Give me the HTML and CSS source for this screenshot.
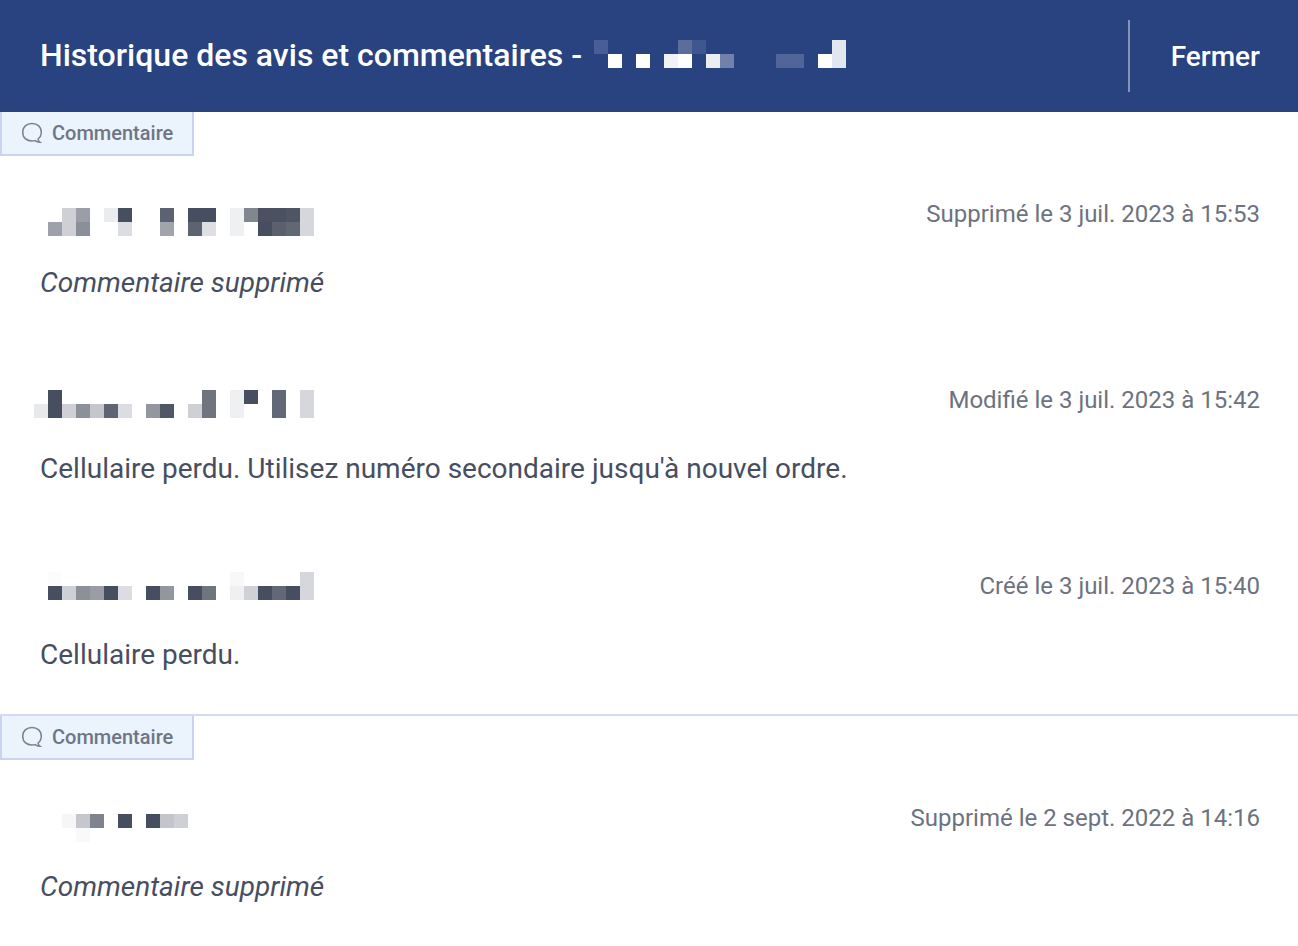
FILE: index.html
```html
<!DOCTYPE html>
<html lang="fr">
<head>
<meta charset="utf-8">
<title>Historique des avis et commentaires</title>
<link rel="stylesheet" href="styles.css">
</head>
<body>
<header class="header">
  <h1 class="title">Historique des avis et commentaires -
    <svg class="mask" width="252" height="28" viewBox="0 1 252 28" shape-rendering="crispEdges" aria-hidden="true">
      <path fill="#495e96" d="M0 0h14v14H0z"/><path fill="#fff" d="M14 14h14v14H14zM42 14h14v14H42zM84 14h14v14H84zM224 14h14v14h-14z"/>
      <path fill="#f0f2f6" d="M70 14h14v14H70z"/><path fill="#5c6c9b" d="M84 0h14v14H84z"/><path fill="#40568f" d="M98 0h14v14H98z"/>
      <path fill="#ecedf2" d="M112 14h14v14h-14z"/><path fill="#7280aa" d="M126 14h14v14h-14z"/><path fill="#51659a" d="M182 14h28v14h-28z"/>
      <path fill="#e2e6ee" d="M238 0h14v28h-14z"/>
    </svg>
  </h1>
  <button class="close" type="button">Fermer</button>
</header>
<main>
  <section class="thread">
    <div class="tag">
      <svg class="bubble" width="20" height="22" viewBox="1 1 20 22" aria-hidden="true"><path d="M17 18.200C19.200 16.500 20.300 14 20.300 11.300C20.300 6 16.500 2.500 11 2.500S1.700 6 1.700 11.300S5.500 20 11 20C12 20 13 19.900 14 19.600C15.300 20.600 16.800 21.200 18.800 21.200C17.600 20.400 17.200 19.400 17 18.200Z"/></svg>
      <span>Commentaire</span>
    </div>
    <article class="entry">
      <div class="entry-head">
        <svg class="mask" width="280" height="28" viewBox="0 0 280 28" shape-rendering="crispEdges" aria-hidden="true">
          <g transform="translate(-6 8)">
            <path fill="#9ea1aa" d="M14 14h14v14H14z"/><path fill="#cfd0d5" d="M28 0h14v28H28z"/><path fill="#9b9da7" d="M42 0h14v14H42z"/><path fill="#8a8f99" d="M42 14h14v14H42z"/>
            <path fill="#ebecee" d="M70 0h14v14H70z"/><path fill="#474e5f" d="M84 0h14v14H84z"/><path fill="#dcdde2" d="M84 14h14v14H84z"/>
            <path fill="#5c6270" d="M126 0h14v14h-14z"/><path fill="#a1a4ad" d="M126 14h14v14h-14z"/>
            <path fill="#474e5f" d="M154 0h28v14h-28z"/><path fill="#5d6471" d="M154 14h14v14h-14z"/><path fill="#dedfe2" d="M168 14h14v14h-14z"/>
            <path fill="#eff0f1" d="M196 0h14v28h-14z"/><path fill="#81868f" d="M210 0h14v14h-14z"/><path fill="#4a5160" d="M224 0h28v14h-28z"/><path fill="#4e5565" d="M252 0h14v14h-14z"/>
            <path fill="#474e5f" d="M224 14h14v14h-14z"/><path fill="#5a616d" d="M238 14h14v14h-14z"/><path fill="#616773" d="M252 14h14v14h-14z"/><path fill="#d6d7dc" d="M266 0h14v28h-14z"/>
          </g>
        </svg>
        <time class="date">Supprimé le 3 juil. 2023 à 15:53</time>
      </div>
      <p class="message removed">Commentaire supprimé</p>
    </article>
    <article class="entry">
      <div class="entry-head">
        <svg class="mask" width="280" height="28" viewBox="0 0 280 28" shape-rendering="crispEdges" aria-hidden="true">
          <g transform="translate(-6 4)">
            <path fill="#e8e9ea" d="M0 14h14v14H0z"/><path fill="#474e5f" d="M14 0h14v28H14z"/><path fill="#cfd0d5" d="M28 14h14v14H28z"/><path fill="#8b9099" d="M42 14h14v14H42z"/><path fill="#c5c6cc" d="M56 14h14v14H56z"/><path fill="#5e6472" d="M70 14h14v14H70z"/><path fill="#dcdde2" d="M84 14h14v14H84z"/>
            <path fill="#92969f" d="M112 14h14v14h-14z"/><path fill="#505867" d="M126 14h14v14h-14z"/>
            <path fill="#cfd0d5" d="M154 14h14v14h-14z"/><path fill="#70747f" d="M168 0h14v28h-14z"/>
            <path fill="#eff0f1" d="M196 0h14v28h-14z"/><path fill="#474e5f" d="M210 0h14v14h-14z"/><path fill="#626875" d="M238 0h14v28h-14z"/><path fill="#d6d7dc" d="M266 0h14v28h-14z"/>
          </g>
        </svg>
        <time class="date">Modifié le 3 juil. 2023 à 15:42</time>
      </div>
      <p class="message">Cellulaire perdu. Utilisez numéro secondaire jusqu'à nouvel ordre.</p>
    </article>
    <article class="entry">
      <div class="entry-head">
        <svg class="mask" width="280" height="28" viewBox="0 0 280 28" shape-rendering="crispEdges" aria-hidden="true">
          <g transform="translate(-6 0)">
            <path fill="#fcfcfd" d="M14 0h14v14H14z"/><path fill="#474e5f" d="M14 14h14v14H14z"/><path fill="#cfd0d5" d="M28 14h14v14H28z"/><path fill="#8b9099" d="M42 14h14v14H42z"/><path fill="#9b9da5" d="M56 14h14v14H56z"/><path fill="#474e5f" d="M70 14h14v14H70z"/><path fill="#dcdde2" d="M84 14h14v14H84z"/>
            <path fill="#474e5f" d="M112 14h14v14h-14z"/><path fill="#92969f" d="M126 14h14v14h-14z"/>
            <path fill="#474e5f" d="M154 14h14v14h-14z"/><path fill="#70747f" d="M168 14h14v14h-14z"/>
            <path fill="#f8f8f9" d="M196 0h14v14h-14z"/><path fill="#eff0f1" d="M196 14h14v14h-14z"/><path fill="#d0d1d6" d="M210 14h14v14h-14z"/><path fill="#474e5f" d="M224 14h14v14h-14zM252 14h14v14h-14z"/><path fill="#626875" d="M238 14h14v14h-14z"/><path fill="#d6d7dc" d="M266 0h14v28h-14z"/>
          </g>
        </svg>
        <time class="date">Créé le 3 juil. 2023 à 15:40</time>
      </div>
      <p class="message">Cellulaire perdu.</p>
    </article>
  </section>
  <section class="thread">
    <div class="tag">
      <svg class="bubble" width="20" height="22" viewBox="1 1 20 22" aria-hidden="true"><path d="M17 18.200C19.200 16.500 20.300 14 20.300 11.300C20.300 6 16.500 2.500 11 2.500S1.700 6 1.700 11.300S5.500 20 11 20C12 20 13 19.900 14 19.600C15.300 20.600 16.800 21.200 18.800 21.200C17.600 20.400 17.200 19.400 17 18.200Z"/></svg>
      <span>Commentaire</span>
    </div>
    <article class="entry">
      <div class="entry-head">
        <svg class="mask" width="280" height="28" viewBox="0 0 280 28" shape-rendering="crispEdges" aria-hidden="true">
          <g transform="translate(-6 10)">
            <path fill="#f6f6f6" d="M28 0h14v14H28z"/><path fill="#c6c7cd" d="M42 0h14v14H42z"/><path fill="#7f838e" d="M56 0h14v14H56z"/><path fill="#474e5f" d="M84 0h14v14H84zM112 0h14v14h-14z"/><path fill="#c4c5ca" d="M126 0h14v14h-14z"/><path fill="#cfd0d5" d="M140 0h14v14h-14z"/><path fill="#f8faf9" d="M42 14h14v14H42z"/>
          </g>
        </svg>
        <time class="date">Supprimé le 2 sept. 2022 à 14:16</time>
      </div>
      <p class="message removed">Commentaire supprimé</p>
    </article>
  </section>
</main>
</body>
</html>
```
FILE: styles.css
```css
* {
  box-sizing: border-box;
}

body {
  margin: 0;
  background: #fff;
  color: #474e5f;
  font-family: Roboto, "Liberation Sans", sans-serif;
}

.header {
  display: flex;
  align-items: center;
  justify-content: space-between;
  padding: 20px 0;
  background: #294280;
  color: #fff;
}

.title {
  display: flex;
  align-items: center;
  gap: 12px;
  margin: 0;
  padding: 0 0 2px 40px;
  font-size: 32px;
  font-weight: 500;
  line-height: 40px;
}

.close {
  padding: 2px 38px 0 41px;
  border: 0;
  border-left: 2px solid #8593b6;
  background: none;
  color: inherit;
  font: 500 28px/70px Roboto, "Liberation Sans", sans-serif;
  cursor: pointer;
}

.mask {
  flex: none;
  overflow: visible;
}

.thread + .thread {
  border-top: 2px solid #d1daf0;
}

.tag {
  display: flex;
  align-items: center;
  gap: 10px;
  width: fit-content;
  padding: 10px 19px 10px 20px;
  border: 2px solid #c9d4ef;
  border-top: 0;
  background: #ebf3fc;
  color: #6f7583;
  font-size: 20px;
  font-weight: 500;
  line-height: 22px;
}

.bubble {
  fill: none;
  stroke: #7b808c;
  stroke-width: 1.5;
}

.entry {
  padding: 40px 38px 41px 40px;
}

.entry-head {
  display: flex;
  align-items: center;
  justify-content: space-between;
  min-height: 36px;
}

.date {
  color: #6c7280;
  font-size: 24px;
  line-height: 36px;
}

.message {
  margin: 33px 0 0;
  font-size: 28px;
  line-height: 36px;
}

.removed {
  font-style: italic;
}
```
